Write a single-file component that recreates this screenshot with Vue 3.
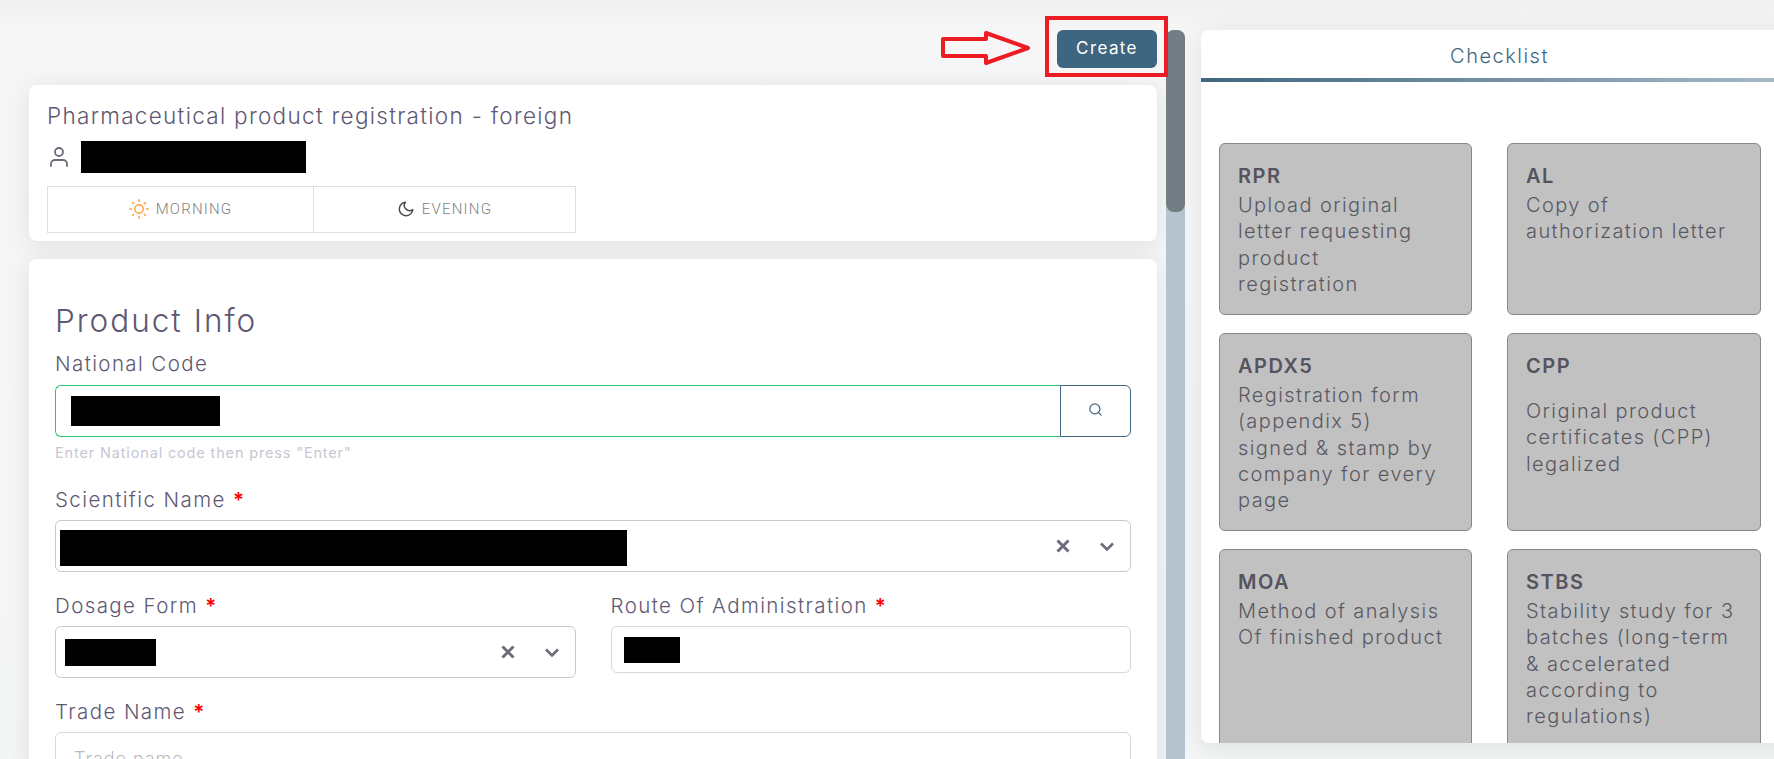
<template>
  <div class="page">
    <main class="form-col">
      <div class="toolbar">
        <svg class="arrow" width="92" height="36" viewBox="0 0 92 36">
          <path d="M3 9H46V3L88 18 46 33V26H3Z" fill="none" stroke="#ed1c24" stroke-width="4" stroke-linejoin="round" />
        </svg>
        <div class="create-wrap">
          <button class="create">Create</button>
        </div>
      </div>

      <section class="card head-card">
        <h2 class="head-title">Pharmaceutical product registration - foreign</h2>
        <div class="user-row">
          <svg class="user-icon" width="24" height="26" viewBox="0 0 24 24" fill="none" stroke="#6e6b7b" stroke-width="1.8" stroke-linecap="round" stroke-linejoin="round">
            <path d="M20 21v-2a4 4 0 0 0-4-4H8a4 4 0 0 0-4 4v2" />
            <circle cx="12" cy="7" r="4" />
          </svg>
          <div class="redact user-redact"></div>
        </div>
        <div class="shifts">
          <div class="shift shift-first">
            <svg width="20" height="20" viewBox="0 0 24 24" fill="none" stroke="#ff9f43" stroke-width="1.8" stroke-linecap="round" stroke-linejoin="round">
              <circle cx="12" cy="12" r="5" />
              <path d="M12 1v2M12 21v2M4.22 4.22l1.42 1.42M18.36 18.36l1.42 1.42M1 12h2M21 12h2M4.22 19.78l1.42-1.42M18.36 5.64l1.42-1.42" />
            </svg>
            <span>MORNING</span>
          </div>
          <div class="shift">
            <svg width="18" height="18" viewBox="0 0 24 24" fill="none" stroke="#4b4b4b" stroke-width="2" stroke-linecap="round" stroke-linejoin="round">
              <path d="M21 12.79A9 9 0 1 1 11.21 3 7 7 0 0 0 21 12.79z" />
            </svg>
            <span>EVENING</span>
          </div>
        </div>
      </section>

      <section class="card info-card">
        <h1 class="info-title">Product Info</h1>

        <label class="field-label code-label">National Code</label>
        <div class="code-group">
          <div class="code-input"><div class="redact code-redact"></div></div>
          <button class="code-search">
            <svg width="15" height="15" viewBox="0 0 24 24" fill="none" stroke="#3f6680" stroke-width="2" stroke-linecap="round" stroke-linejoin="round">
              <circle cx="11" cy="11" r="8" />
              <path d="M21 21l-4.35-4.35" />
            </svg>
          </button>
        </div>
        <p class="help">Enter National code then press "Enter"</p>

        <label class="field-label sci-label">Scientific Name <b>*</b></label>
        <div class="select">
          <div class="redact sci-redact"></div>
          <svg class="sel-x" width="16" height="16" viewBox="0 0 16 16"><path d="M2.5 2.5l11 11M13.5 2.5l-11 11" stroke="#6e6b7b" stroke-width="3" /></svg>
          <svg class="sel-chev" width="16" height="16" viewBox="0 0 16 16"><path d="M2 5.5l6 6 6-6" fill="none" stroke="#6e6b7b" stroke-width="2.6" /></svg>
        </div>

        <div class="two-col">
          <div>
            <label class="field-label">Dosage Form <b>*</b></label>
            <div class="select">
              <div class="redact dose-redact"></div>
              <svg class="sel-x" width="16" height="16" viewBox="0 0 16 16"><path d="M2.5 2.5l11 11M13.5 2.5l-11 11" stroke="#6e6b7b" stroke-width="3" /></svg>
              <svg class="sel-chev" width="16" height="16" viewBox="0 0 16 16"><path d="M2 5.5l6 6 6-6" fill="none" stroke="#6e6b7b" stroke-width="2.6" /></svg>
            </div>
          </div>
          <div>
            <label class="field-label">Route Of Administration <b>*</b></label>
            <div class="route-input"><div class="redact route-redact"></div></div>
          </div>
        </div>

        <label class="field-label trade-label">Trade Name <b>*</b></label>
        <input class="trade-input" placeholder="Trade name" />
      </section>
    </main>

    <div class="scroll-track"><div class="scroll-thumb"></div></div>

    <aside class="checklist">
      <div class="tab">Checklist</div>
      <div class="tab-line"></div>
      <div class="docs">
        <div v-for="doc in docs" :key="doc.code" class="doc">
          <div class="doc-code" :class="{ spaced: doc.code === 'CPP' }">{{ doc.code }}</div>
          <div v-for="line in doc.lines" :key="line">{{ line }}</div>
        </div>
      </div>
    </aside>
  </div>
</template>

<script setup>
const docs = [
  { code: 'RPR', lines: ['Upload original', 'letter requesting', 'product', 'registration'] },
  { code: 'AL', lines: ['Copy of', 'authorization letter'] },
  { code: 'APDX5', lines: ['Registration form', '(appendix 5)', 'signed & stamp by', 'company for every', 'page'] },
  { code: 'CPP', lines: ['Original product', 'certificates (CPP)', 'legalized'] },
  { code: 'MOA', lines: ['Method of analysis', 'Of finished product'] },
  { code: 'STBS', lines: ['Stability study for 3', 'batches (long-term', '& accelerated', 'according to', 'regulations)'] }
]
</script>

<style>
html, body {
  margin: 0;
  overflow: hidden;
}
</style>

<style scoped>
.page {
  display: flex;
  height: 759px;
  overflow: hidden;
  background: linear-gradient(#eeefef 0, #f6f6f6 30px, #f4f5f5 100%);
  font-family: Inter, "Open Sans", sans-serif;
  font-weight: 300;
  color: #5e5873;
}
.form-col {
  flex: none;
  width: 1128px;
  margin-left: 29px;
  padding-top: 30px;
}
.toolbar {
  position: relative;
  display: flex;
  justify-content: flex-end;
  margin-bottom: 17px;
}
.arrow {
  position: absolute;
  left: 911px;
  top: 0;
}
.create-wrap {
  position: relative;
  display: flex;
}
.create-wrap::after {
  content: "";
  position: absolute;
  left: -12px;
  right: -11px;
  top: -14px;
  bottom: -9px;
  border: 4px solid #ed1c24;
}
.create {
  width: 100px;
  height: 38px;
  padding: 0 0 3px;
  border: 0;
  border-radius: 6px;
  background: #3f6680;
  color: #fff;
  font-family: inherit;
  font-size: 17px;
  font-weight: 400;
  letter-spacing: 1.4px;
}
.card {
  background: #fff;
  border-radius: 8px;
  box-shadow: 0 4px 24px rgba(34, 41, 47, 0.1);
}
.head-card {
  height: 156px;
  box-sizing: border-box;
  padding: 16px 18px 0;
  margin-bottom: 18px;
}
.head-title {
  margin: 0 0 10px;
  font-size: 22.5px;
  line-height: 30px;
  font-weight: 300;
  letter-spacing: 1.3px;
}
.user-row {
  display: flex;
  align-items: center;
  height: 32px;
  margin-bottom: 13px;
}
.user-icon {
  margin: 0 10px 0 0;
}
.redact {
  background: #000;
}
.user-redact {
  width: 225px;
  height: 32px;
}
.shifts {
  display: flex;
  width: 529px;
  height: 47px;
  box-sizing: border-box;
  border: 1px solid #dfdfdf;
}
.shift {
  flex: 1;
  display: flex;
  align-items: center;
  justify-content: center;
  gap: 7px;
  padding-bottom: 1px;
  font-family: Roboto, sans-serif;
  font-weight: 300;
  font-size: 15px;
  letter-spacing: 1.2px;
  color: #7f7f7f;
}
.shift-first {
  flex: none;
  width: 265px;
}
.shift + .shift {
  border-left: 1px solid #dfdfdf;
}
.info-card {
  height: 520px;
  box-sizing: border-box;
  padding: 42px 26px 0;
}
.info-title {
  margin: 0 0 11px;
  font-size: 31.5px;
  line-height: 40px;
  font-weight: 300;
  letter-spacing: 2px;
}
.field-label {
  display: block;
  font-size: 20.5px;
  line-height: 24px;
  letter-spacing: 1.4px;
  margin-bottom: 8px;
}
.code-label {
  margin-bottom: 9px;
}
.field-label b {
  color: #ff0000;
  font-weight: 600;
}
.code-group {
  display: flex;
  height: 52px;
}
.code-input {
  flex: 1;
  display: flex;
  align-items: center;
  padding-left: 15px;
  border: 1px solid #28c76f;
  border-right: 0;
  border-radius: 6px 0 0 6px;
}
.code-redact {
  width: 149px;
  height: 30px;
}
.code-search {
  width: 71px;
  padding: 0;
  background: #fff;
  border: 1px solid #3f6680;
  border-radius: 0 6px 6px 0;
}
.help {
  margin: 7px 0 0;
  font-size: 14.5px;
  line-height: 18px;
  letter-spacing: 0.85px;
  font-weight: 400;
  color: #c8c6d2;
}
.sci-label {
  margin-top: 26px;
}
.select {
  position: relative;
  display: flex;
  align-items: center;
  height: 52px;
  box-sizing: border-box;
  padding-left: 4px;
  border: 1px solid #c9c8ce;
  border-radius: 6px;
}
.sel-x {
  margin-left: auto;
}
.sel-chev {
  margin: 0 15px 0 28px;
}
.sci-redact {
  width: 567px;
  height: 36px;
  margin-top: 3px;
}
.two-col {
  display: grid;
  grid-template-columns: 1fr 1fr;
  column-gap: 35px;
  margin-top: 22px;
}
.two-col .select {
  padding-left: 9px;
}
.dose-redact {
  width: 91px;
  height: 27px;
}
.route-input {
  display: flex;
  align-items: center;
  height: 47px;
  box-sizing: border-box;
  padding-left: 12px;
  border: 1px solid #d8d6de;
  border-radius: 6px;
}
.route-redact {
  width: 56px;
  height: 26px;
}
.trade-label {
  margin-top: 22px;
  margin-bottom: 8px;
}
.trade-input {
  display: block;
  width: 100%;
  height: 52px;
  box-sizing: border-box;
  padding: 0 18px;
  border: 1px solid #d8d6de;
  border-radius: 6px;
  font-family: inherit;
  font-size: 18px;
  font-weight: 300;
  letter-spacing: 1px;
}
.trade-input::placeholder {
  color: #b9b9c3;
}
.scroll-track {
  flex: none;
  width: 19px;
  margin: 30px 0 0 9px;
  background: #b4c3cd;
  border-radius: 8px 8px 0 0;
}
.scroll-thumb {
  height: 182px;
  background: #737d84;
  border-radius: 8px;
}
.checklist {
  flex: none;
  width: 597px;
  height: 713px;
  margin: 30px 0 0 16px;
  overflow: hidden;
  background: #fff;
  border-radius: 8px 0 0 8px;
  box-shadow: 0 4px 24px rgba(34, 41, 47, 0.1);
}
.tab {
  height: 48px;
  box-sizing: border-box;
  padding-top: 3px;
  line-height: 47px;
  text-align: center;
  font-size: 20px;
  font-weight: 300;
  letter-spacing: 1.5px;
  color: #3f6680;
}
.tab-line {
  height: 4px;
  background: linear-gradient(90deg, #3f6680, #a9bcc8);
}
.docs {
  display: grid;
  grid-template-columns: 253px 254px;
  grid-template-rows: 172px 198px 220px;
  column-gap: 35px;
  row-gap: 18px;
  padding: 61px 0 0 18px;
}
.doc {
  box-sizing: border-box;
  padding: 19px 18px 0;
  background: #c1c1c1;
  border: 1px solid #87878b;
  border-radius: 6px;
  font-size: 20px;
  line-height: 26.2px;
  font-weight: 300;
  letter-spacing: 1.4px;
  color: #5a5963;
}
.doc-code {
  margin-bottom: 3px;
  font-weight: 600;
  letter-spacing: 1.5px;
  color: #55535f;
}
.doc-code.spaced {
  margin-bottom: 19px;
}
</style>
